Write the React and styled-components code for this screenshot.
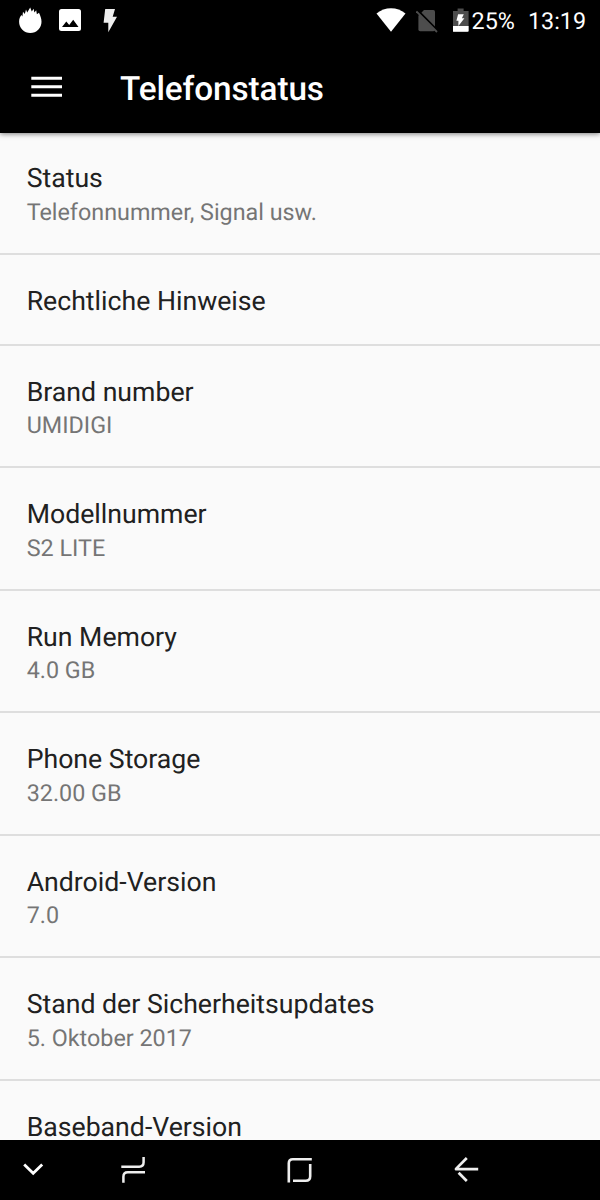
import React from "react";
import styled, { createGlobalStyle } from "styled-components";

const settings = [
  { title: "Status", summary: "Telefonnummer, Signal usw." },
  { title: "Rechtliche Hinweise" },
  { title: "Brand number", summary: "UMIDIGI" },
  { title: "Modellnummer", summary: "S2 LITE" },
  { title: "Run Memory", summary: "4.0 GB" },
  { title: "Phone Storage", summary: "32.00 GB" },
  { title: "Android-Version", summary: "7.0" },
  { title: "Stand der Sicherheitsupdates", summary: "5. Oktober 2017" },
  { title: "Baseband-Version" },
];

function StatusIcons() {
  return (
    <Notifications>
      <svg width="24" height="26" viewBox="0.6 0 24 26">
        <path
          fill="#fff"
          d="M4 9.5 4.6 4.8 6.4 7 7.6 2.6 8.8 5.4 11.8 .5 13.4 4.6 15.2 1.8 16 5.4 17.8 3.2 18.5 7.2 20.6 5.8 C22 8.8 23.1 11.5 23.1 14.8 A11.2 11.2 0 0 1 .7 14.8 C.7 11.5 1.8 9.6 3 8 Z"
        />
      </svg>
      <svg width="22" height="26" viewBox="0 0 22 26">
        <rect x="0" y="2" width="22" height="22" rx="2.5" fill="#fff" />
        <path d="M3 20 7.3 14.5 10.2 18 14.2 12.8 19.5 20Z" fill="#000" />
      </svg>
      <svg width="14" height="26" viewBox="0 0 14 26">
        <path d="M2.2 2H12L9.7 9.7H14L5.3 25.3V15.7H.6Z" fill="#eee" />
      </svg>
    </Notifications>
  );
}

function SystemIcons() {
  return (
    <System>
      <svg width="30" height="26" viewBox="0 0 30 26">
        <path d="M.5 6.6Q7 1.2 15 1.2T29.5 6.6L15 24.8Z" fill="#fff" />
      </svg>
      <NoSim width="22" height="26" viewBox="0 0 22 26">
        <path d="M8 3H17.3Q19 3 19 4.7V22.5Q19 24.3 17.3 24.3H4.2Q2.4 24.3 2.4 22.5V8.8Z" fill="#4d4d4d" />
        <path d="M1.6 3.2 22 24" stroke="#000" strokeWidth="2" />
        <path d="M.4 4.4 21 25" stroke="#4d4d4d" strokeWidth="1.8" />
      </NoSim>
      <Battery width="16" height="26" viewBox="0.4 0 16 26">
        <path d="M5 1.5H11V4H16V24.8H0V4H5Z" fill="#4d4d4d" />
        <path d="M0 19H16V23.6Q16 24.8 14.8 24.8H1.2Q0 24.8 0 23.6Z" fill="#fff" />
        <path d="M5.5 7.2H11.2L9.3 11.3H11.8L5.8 19V13.8H3.8Z" fill="#fff" />
      </Battery>
      <Percent>25%</Percent>
      <Clock>13:19</Clock>
    </System>
  );
}

function App() {
  return (
    <>
      <GlobalStyle />
      <Screen>
        <Header>
          <StatusBar>
            <StatusIcons />
            <SystemIcons />
          </StatusBar>
          <Toolbar>
            <MenuButton aria-label="Menü">
              <svg width="31" height="22" viewBox="0 0 31 22">
                <path d="M.3 2.3H31M.3 10.8H31M.3 19.2H31" stroke="#fff" strokeWidth="3" />
              </svg>
            </MenuButton>
            <Heading>Telefonstatus</Heading>
          </Toolbar>
        </Header>
        <List>
          {settings.map((item) => (
            <Row key={item.title} $single={!item.summary}>
              <Title>{item.title}</Title>
              {item.summary && <Summary>{item.summary}</Summary>}
            </Row>
          ))}
        </List>
        <NavBar>
          <svg width="22" height="28" viewBox="0 0 22 28">
            <path d="M2.2 9.5 11.2 18.3 20.2 9.5" fill="none" stroke="#fff" strokeWidth="2.8" />
          </svg>
          <svg width="26" height="28" viewBox="0 0 26 28">
            <g fill="none" stroke="#eee" strokeWidth="2.5">
              <path d="M1.3 11.7H19.2Q23.6 11.7 23.6 7.3V2" />
              <path d="M25 17.3H7.8Q3.4 17.3 3.4 21.7V27.7" />
            </g>
          </svg>
          <svg width="26" height="28" viewBox="-0.6 0 26 28">
            <g fill="none" stroke="#eee" strokeWidth="2.6">
              <path d="M2.2 27.5V8.2Q2.2 4.2 6.2 4.2H25.2" />
              <path d="M23.6 9V21.3Q23.6 25.8 19.1 25.8H6.4" />
            </g>
          </svg>
          <svg width="26" height="28" viewBox="-0.6 0 26 28">
            <g fill="none" stroke="#eee" strokeWidth="2.7">
              <path d="M13.2 3 2.4 13.9V14.2H24.6" strokeLinejoin="round" />
              <path d="M5 17.7 13.2 26" />
            </g>
          </svg>
        </NavBar>
      </Screen>
    </>
  );
}

export default App;

const GlobalStyle = createGlobalStyle`
  body {
    margin: 0;
    font-family: Roboto, "Liberation Sans", sans-serif;
    text-rendering: geometricPrecision;
    background-color: #fafafa;
  }
`;

const Screen = styled.div`
  display: flex;
  flex-direction: column;
  width: 600px;
  height: 1200px;
  overflow: hidden;
`;

const Header = styled.header`
  flex: none;
  height: 133px;
  background-color: #000;
  color: #fff;
  box-shadow: 0 1px 5px rgba(0, 0, 0, 0.5);
  z-index: 1;
`;

const StatusBar = styled.div`
  box-sizing: border-box;
  display: flex;
  justify-content: space-between;
  height: 40px;
  padding: 7px 14px 0 19px;
`;

const Notifications = styled.div`
  display: flex;

  svg + svg {
    margin-left: 16px;
  }

  svg:last-child {
    margin-left: 22px;
  }
`;

const System = styled.div`
  display: flex;
  font-size: 23.33px;
  line-height: 28px;
`;

const NoSim = styled.svg`
  margin-left: 10px;
`;

const Battery = styled.svg`
  margin-left: 15px;
`;

const Percent = styled.span`
  margin-left: 3px;
`;

const Clock = styled.span`
  margin-left: 13px;
`;

const Toolbar = styled.div`
  display: flex;
  align-items: center;
  height: 93px;
  padding-left: 31px;
`;

const MenuButton = styled.button`
  display: flex;
  border: none;
  padding: 0;
  background-color: transparent;
`;

const Heading = styled.h1`
  margin: 6px 0 0 58px;
  font-size: 33.33px;
  font-weight: 500;
  letter-spacing: -0.1px;
  line-height: 40px;
`;

const List = styled.main`
  flex: 1;
  min-height: 0;
  margin-top: -1px;
  overflow: hidden;
  background-color: #fafafa;
`;

const Row = styled.div`
  box-sizing: border-box;
  height: ${(props) => (props.$single ? "91px" : "122.5px")};
  padding: 30px 26.67px 0;
  border-bottom: 2px solid #dedede;
`;

const Title = styled.div`
  color: #212121;
  font-size: 26.67px;
  line-height: 32px;
`;

const Summary = styled.div`
  margin-top: 3.6px;
  color: #757575;
  font-size: 23.33px;
  line-height: 28px;
`;

const NavBar = styled.nav`
  flex: none;
  box-sizing: border-box;
  display: grid;
  grid-template-columns: 98px 166px 167px 26px;
  height: 60px;
  padding: 15px 0 0 22px;
  background-color: #000;
`;
